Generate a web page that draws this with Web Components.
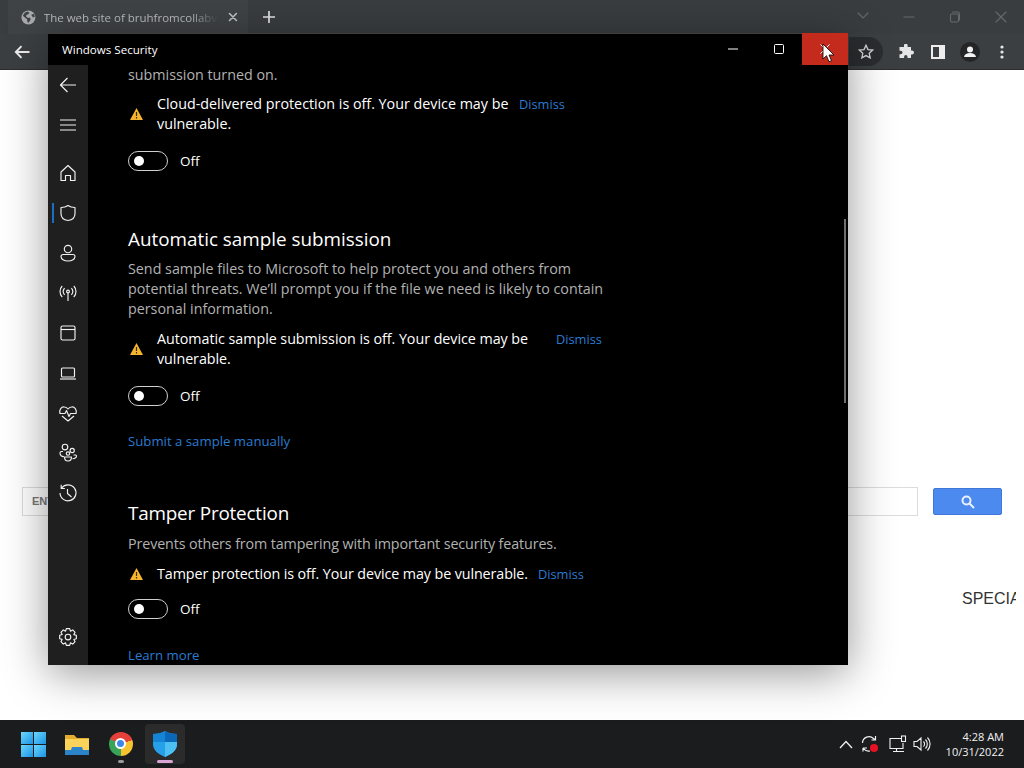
<!DOCTYPE html>
<html lang="en">
<head>
<meta charset="utf-8">
<title>Windows Security</title>
<style>
    html, body { margin: 0; height: 100%; overflow: hidden; background: #fff; }
</style>
</head>
<body>
<desktop-shell>
    <browser-tabs slot="tabs"></browser-tabs>
    <browser-toolbar slot="toolbar"></browser-toolbar>
    <web-page slot="page"></web-page>
    <task-bar slot="taskbar"></task-bar>
    <security-window slot="window">
        <security-pane>
            <p class="desc">submission turned on.</p>
            <warn-row style="--text-w: 351px">Cloud-delivered protection is off. Your device may be<br>vulnerable.</warn-row>
            <off-toggle></off-toggle>

            <h2>Automatic sample submission</h2>
            <p class="desc">Send sample files to Microsoft to help protect you and others from<br>potential threats. We’ll prompt you if the file we need is likely to contain<br>personal information.</p>
            <warn-row style="--text-w: 388px; --row-top: 10px; --tight: -.04px">Automatic sample submission is off. Your device may be<br>vulnerable.</warn-row>
            <off-toggle></off-toggle>
            <a class="more one">Submit a sample manually</a>

            <h2 class="tamper">Tamper Protection</h2>
            <p class="desc tight">Prevents others from tampering with important security features.</p>
            <warn-row style="--text-w: 370px; --row-top: 10px; --tight: -.09px">Tamper protection is off. Your device may be vulnerable.</warn-row>
            <off-toggle style="--toggle-top: 15px"></off-toggle>
            <a class="more two">Learn more</a>
        </security-pane>
    </security-window>
    <mouse-cursor slot="cursor"></mouse-cursor>
</desktop-shell>

<script>
function fill(el, html) {
    const root = el.attachShadow({mode: 'open'})
    const template = document.createElement('template')
    template.innerHTML = html
    root.append(template.content.cloneNode(true))
}

class DesktopShell extends HTMLElement {
    constructor() {
        super()
        fill(this, `
            <style>
                :host {
                    display: flex;
                    flex-direction: column;
                    position: relative;
                    width: 1024px;
                    height: 768px;
                    overflow: hidden;
                }
                .page { flex: 1; min-height: 0; display: flex; }
            </style>
            <slot name="tabs"></slot>
            <slot name="toolbar"></slot>
            <div class="page"><slot name="page"></slot></div>
            <slot name="taskbar"></slot>
            <slot name="window"></slot>
            <slot name="cursor"></slot>
        `)
    }
}

class BrowserTabs extends HTMLElement {
    constructor() {
        super()
        fill(this, `
            <style>
                :host {
                    display: flex;
                    align-items: center;
                    height: 34px;
                    background: #3a3d40;
                    color: #b9bbbd;
                    font: 11.500px "Open Sans", sans-serif;
                }
                .tab {
                    display: flex;
                    align-items: center;
                    box-sizing: border-box;
                    width: 240px;
                    height: 34px;
                    margin-left: 8px;
                    padding: 0 10px 0 13px;
                    background: #404346;
                }
                .title {
                    width: 176px;
                    margin-left: 8px;
                    white-space: nowrap;
                    -webkit-mask-image: linear-gradient(90deg, #000 85%, transparent);
                }
                .x { margin-left: 10px; }
                .plus { margin-left: 15px; }
                .controls { display: flex; margin-left: auto; margin-right: 0; }
                .controls svg { width: 46px; height: 28px; }
                svg { display: block; fill: none; stroke-linecap: round; }
            </style>
            <div class="tab">
                <svg width="15" height="15" viewBox="0 0 16 16">
                    <circle cx="8" cy="8" r="7.500" fill="#a8aaac"/>
                    <path d="M4 3l3-1.500 2 1-1 2-2 .500-.500 2 2 1.500 2-.500 1 2-2 3.500-1.500-.500-.500-3-3-2.500-1.500-1.500z" fill="#404346"/>
                    <path d="M11 5l3-1 1 3-2 1z" fill="#404346"/>
                </svg>
                <div class="title">The web site of bruhfromcollabv</div>
                <svg class="x" width="10" height="10" viewBox="0 0 10 10" stroke="#c4c6c8" stroke-width="1.600">
                    <path d="M1.500 1.500l7 7M8.500 1.500l-7 7"/>
                </svg>
            </div>
            <svg class="plus" width="12" height="12" viewBox="0 0 12 12" stroke="#e2e3e4" stroke-width="1.700">
                <path d="M6 .5v11M.5 6h11"/>
            </svg>
            <div class="controls">
                <svg viewBox="0 0 46 28" stroke="#66696c" stroke-width="1.100"><path d="M18 10l5 5 5-5"/></svg>
                <svg viewBox="0 0 46 28" stroke="#66696c" stroke-width="1.100"><path d="M18 14h10"/></svg>
                <svg viewBox="0 0 46 28" stroke="#66696c" stroke-width="1.100"><rect x="18.500" y="11" width="8" height="8" rx="1.500"/><path d="M20.500 9h5a2 2 0 0 1 2 2v6"/></svg>
                <svg viewBox="0 0 46 28" stroke="#66696c" stroke-width="1.100"><path d="M18 9l10 10M28 9l-10 10"/></svg>
            </div>
        `)
    }
}

class BrowserToolbar extends HTMLElement {
    constructor() {
        super()
        fill(this, `
            <style>
                :host {
                    display: flex;
                    align-items: center;
                    box-sizing: border-box;
                    height: 36px;
                    padding: 0 6px 0 14px;
                    background: #3c3f42;
                    border-bottom: 1px solid #2c2e30;
                }
                .tools { display: flex; align-items: center; margin-left: auto; }
                .star {
                    display: flex;
                    align-items: center;
                    justify-content: center;
                    width: 34px;
                    height: 29px;
                    margin-right: 7px;
                    border-radius: 0 15px 15px 0;
                    background: #2a2c2f;
                }
                .slot { width: 32px; display: flex; justify-content: center; }
                svg { display: block; }
            </style>
            <svg width="16" height="14" viewBox="0 0 16 14" fill="none" stroke="#eceded" stroke-width="1.900">
                <path d="M15.500 7H2M7.500 1.200L1.800 7l5.700 5.800"/>
            </svg>
            <div class="tools">
                <div class="star">
                    <svg width="16" height="15" viewBox="0 0 16 15" fill="none" stroke="#d6d7d8" stroke-width="1.300">
                        <path d="M8 1.300l2 4.300 4.600.5-3.400 3.200 1 4.600L8 11.600l-4.200 2.300 1-4.600L1.400 6.100 6 5.600z"/>
                    </svg>
                </div>
                <div class="slot">
                    <svg width="16" height="16" viewBox="0 0 16 16" fill="#e4e5e6">
                        <path d="M6 1.500a1.800 1.800 0 0 1 3.600 0V3h3.400v3.400h1a2 2 0 0 1 0 4h-1V14H9.500v-1.200a1.700 1.700 0 0 0-3.400 0V14H1.500v-3.700h1.200a1.800 1.800 0 0 0 0-3.600H1.500V3H6z"/>
                    </svg>
                </div>
                <div class="slot">
                    <svg width="14" height="14" viewBox="0 0 14 14" fill="none" stroke="#eeeeee" stroke-width="2">
                        <rect x="1" y="1" width="12" height="12"/>
                        <rect x="8" y="1" width="5" height="12" fill="#eeeeee" stroke="none"/>
                    </svg>
                </div>
                <div class="slot">
                    <svg width="20" height="20" viewBox="0 0 20 20">
                        <circle cx="10" cy="10" r="10" fill="#232527"/>
                        <circle cx="10" cy="7.500" r="3" fill="#f2f2f2"/>
                        <path d="M4 15c.5-3 3-4 6-4s5.500 1 6 4z" fill="#f2f2f2"/>
                    </svg>
                </div>
                <div class="slot">
                    <svg width="4" height="14" viewBox="0 0 4 14" fill="#e8e8e8">
                        <circle cx="2" cy="2" r="1.600"/><circle cx="2" cy="7" r="1.600"/><circle cx="2" cy="12" r="1.600"/>
                    </svg>
                </div>
            </div>
        `)
    }
}

class WebPage extends HTMLElement {
    constructor() {
        super()
        fill(this, `
            <style>
                :host {
                    display: block;
                    flex: 1;
                    background: #fff;
                    overflow: hidden;
                    font-family: "Liberation Sans", sans-serif;
                }
                .search {
                    display: flex;
                    align-items: flex-start;
                    gap: 15px;
                    margin: 417px 22px 0 22px;
                }
                .input {
                    flex: none;
                    width: 896px;
                    height: 29px;
                    box-sizing: border-box;
                    padding-left: 9px;
                    border: 1px solid #dcdcdc;
                    color: #777;
                    font-size: 11px;
                    font-weight: bold;
                    line-height: 27px;
                }
                .go {
                    display: flex;
                    align-items: center;
                    justify-content: center;
                    width: 69px;
                    height: 27px;
                    margin-top: 1px;
                    border-radius: 2px;
                    background: #4d8af0;
                    border: 1px solid #3f78d6;
                    box-sizing: border-box;
                }
                .offer {
                    width: 54px;
                    margin: 73px 0 0 962px;
                    overflow: hidden;
                    white-space: nowrap;
                    font-size: 16px;
                    line-height: 20px;
                    color: #333;
                }
            </style>
            <div class="search">
                <div class="input">ENTER</div>
                <div class="go">
                    <svg width="14" height="14" viewBox="0 0 14 14" fill="none" stroke="#e8f1ff" stroke-width="2">
                        <circle cx="5.500" cy="5.500" r="4"/><path d="M8.500 8.500l4.500 4.500"/>
                    </svg>
                </div>
            </div>
            <div class="offer">SPECIA</div>
        `)
    }
}

class TaskBar extends HTMLElement {
    constructor() {
        super()
        fill(this, `
            <style>
                :host {
                    display: flex;
                    align-items: center;
                    height: 48px;
                    background: #1b1c1d;
                    color: #f2f2f2;
                    font: 11px "Open Sans", sans-serif;
                }
                .apps { display: flex; margin-left: 13px; }
                .app {
                    position: relative;
                    display: flex;
                    align-items: center;
                    justify-content: center;
                    width: 40px;
                    height: 40px;
                    margin-right: 4px;
                    border-radius: 4px;
                }
                .app.on { background: #2b2b2b; }
                .dot {
                    position: absolute;
                    bottom: 1px;
                    height: 3px;
                    border-radius: 2px;
                }
                .win {
                    display: grid;
                    grid-template-columns: 12px 12px;
                    gap: 1px;
                }
                .win i { height: 12px; background: linear-gradient(135deg, #6bd6fb, #1b93e6); }
                .chrome {
                    position: relative;
                    width: 24px;
                    height: 24px;
                    border-radius: 50%;
                    background: conic-gradient(#e5413a 0 70deg, #f7c32e 70deg 180deg, #3aa35a 180deg 295deg, #e5413a 295deg);
                }
                .chrome::after {
                    content: "";
                    position: absolute;
                    left: 6px;
                    top: 6px;
                    width: 7px;
                    height: 7px;
                    border: 2.500px solid #fff;
                    border-radius: 50%;
                    background: #3f86e8;
                }
                .tray { display: flex; align-items: center; margin-left: auto; }
                .chev { margin-right: 8px; }
                .sync { margin-right: 10px; }
                .net { margin-right: 6px; }
                .clock { text-align: right; line-height: 15px; margin: 0 20px 0 15px; }
                svg { display: block; fill: none; }
            </style>
            <div class="apps">
                <div class="app"><div class="win"><i></i><i></i><i></i><i></i></div></div>
                <div class="app">
                    <svg width="26" height="24" viewBox="0 0 26 24">
                        <path d="M1 3h9l3 3h12v17H1z" fill="#e3ad2e"/>
                        <path d="M1 7h24v16H1z" fill="#fbd25a"/>
                        <path d="M8 15h10l1 3h6v5H1v-5h6z" fill="#2b83c9"/>
                    </svg>
                </div>
                <div class="app">
                    <div class="chrome"></div>
                    <div class="dot" style="width:6px;background:#9a9a9a"></div>
                </div>
                <div class="app on">
                    <svg width="24" height="26" viewBox="0 0 24 26">
                        <path d="M12 0c3 2 7 3 12 3v10c0 6-5 10-12 13C5 23 0 19 0 13V3c5 0 9-1 12-3z" fill="#27a0ea"/>
                        <path d="M12 0c3 2 7 3 12 3v8H12z" fill="#0b67b8"/>
                        <path d="M12 0C9 2 5 3 0 3v8h12z" fill="#1583d6"/>
                        <path d="M12 11h12v2c0 6-5 10-12 13z" fill="#4cc0f2"/>
                    </svg>
                    <div class="dot" style="width:16px;background:#d9a6d6"></div>
                </div>
            </div>
            <div class="tray">
                <svg class="chev" width="14" height="9" viewBox="0 0 14 9" stroke="#f0f0f0" stroke-width="1.300"><path d="M1 8l6-6.500L13 8"/></svg>
                <svg class="sync" width="18" height="18" viewBox="0 0 18 18" stroke="#f0f0f0" stroke-width="1.200">
                    <path d="M1.500 8a6.500 6.500 0 0 1 11-4.500l2 1.500M14.500 1v4h-4M2 13h4M2 13v3.500M2.500 13.500A6.500 6.500 0 0 0 9 16"/>
                    <circle cx="13" cy="13" r="4" fill="#e81123" stroke="none"/>
                </svg>
                <svg class="net" width="18" height="18" viewBox="0 0 18 18" stroke="#f0f0f0" stroke-width="1.100">
                    <path d="M12 3.500H1v10h13V8M7.500 13.500v2.500M4 16.500h11"/>
                    <rect x="12.500" y="1" width="4" height="5.500"/>
                </svg>
                <svg width="18" height="18" viewBox="0 0 18 18" stroke="#f0f0f0" stroke-width="1.100">
                    <path d="M1 6.500h3l4-3.500v12l-4-3.500H1zM10.500 6.500a3.500 3.500 0 0 1 0 5M12.500 4.500a6.500 6.500 0 0 1 0 9M14.500 2.500a9.500 9.500 0 0 1 0 13"/>
                </svg>
                <div class="clock">4:28 AM<br>10/31/2022</div>
            </div>
        `)
    }
}

class SecurityWindow extends HTMLElement {
    constructor() {
        super()
        fill(this, `
            <style>
                :host {
                    position: absolute;
                    left: 48px;
                    top: 33px;
                    width: 800px;
                    height: 632px;
                    display: flex;
                    flex-direction: column;
                    background: #000;
                    color: #fff;
                    font: 14.300px "Open Sans", sans-serif;
                    box-shadow: inset 0 1px #3f3f3f, 0 8px 42px rgba(0, 0, 0, .42);
                }
                .bar {
                    display: flex;
                    align-items: center;
                    flex: none;
                    height: 32px;
                    padding-left: 14px;
                    font-size: 11.600px;
                }
                .caption { display: flex; margin-left: auto; }
                .caption div {
                    display: flex;
                    align-items: center;
                    justify-content: center;
                    width: 46px;
                    height: 32px;
                }
                .caption .close { background: #c42b1c; }
                .body { flex: 1; min-height: 0; display: flex; position: relative; }
                .scroll {
                    position: absolute;
                    right: 2px;
                    top: 154px;
                    width: 2px;
                    height: 184px;
                    background: #6e6e6e;
                }
                .content { flex: 1; min-width: 0; overflow: hidden; }
                svg { display: block; }
            </style>
            <div class="bar">
                Windows Security
                <div class="caption">
                    <div><svg width="10" height="2" viewBox="0 0 10 2"><path d="M0 1h10" stroke="#fff"/></svg></div>
                    <div><svg width="10" height="10" viewBox="0 0 10 10"><rect x=".5" y=".5" width="9" height="9" rx="1" fill="none" stroke="#fff"/></svg></div>
                    <div class="close"><svg width="10" height="10" viewBox="0 0 10 10"><path d="M.5.5l9 9M9.500.5l-9 9" stroke="#fff"/></svg></div>
                </div>
            </div>
            <div class="body">
                <nav-rail></nav-rail>
                <div class="content"><slot></slot></div>
                <div class="scroll"></div>
            </div>
        `)
    }
}

function gearPath(cx, cy, outer, inner) {
    let d = ''
    for (let i = 0; i < 8; i++) {
        const a = i * Math.PI / 4
        const pts = [[inner, a - .39], [outer, a - .2], [outer, a + .2]]
        for (const [r, t] of pts) {
            d += (d ? 'L' : 'M') + (cx + r * Math.sin(t)).toFixed(2) + ' ' + (cy - r * Math.cos(t)).toFixed(2)
        }
    }
    return d + 'z'
}

class NavRail extends HTMLElement {
    constructor() {
        super()
        fill(this, `
            <style>
                :host {
                    display: flex;
                    flex-direction: column;
                    flex: none;
                    box-sizing: border-box;
                    width: 40px;
                    padding-bottom: 8px;
                    background: #1f1f1f;
                }
                .item {
                    position: relative;
                    display: flex;
                    align-items: center;
                    justify-content: center;
                    flex: none;
                    height: 40px;
                }
                .gap { height: 8px; flex: none; }
                .on::before {
                    content: "";
                    position: absolute;
                    left: 4px;
                    top: 10px;
                    width: 2px;
                    height: 20px;
                    background: #1a6fc4;
                }
                .end { margin-top: auto; }
                svg {
                    display: block;
                    width: 20px;
                    height: 20px;
                    fill: none;
                    stroke: #f2f2f2;
                    stroke-width: 1.150;
                    stroke-linejoin: round;
                }
            </style>
            <div class="item"><svg viewBox="0 0 20 20"><path d="M18 10H2.500M9.500 3l-7 7 7 7"/></svg></div>
            <div class="item"><svg viewBox="0 0 20 20"><path d="M2 5h16M2 10h16M2 15h16"/></svg></div>
            <div class="gap"></div>
            <div class="item"><svg viewBox="0 0 20 20"><path d="M10 2.500L17 9v8.500h-4.500v-5h-5v5H3V9z"/></svg></div>
            <div class="item on"><svg viewBox="0 0 20 20"><path d="M10 2.500c2 1.500 4.500 2 7 2v6c0 4-3 6.500-7 7-4-.5-7-3-7-7v-6c2.500 0 5-.5 7-2z"/></svg></div>
            <div class="item"><svg viewBox="0 0 20 20"><circle cx="10" cy="6" r="3.700"/><path d="M5 11.500h10a2 2 0 0 1 2 2c0 2.500-3 4.500-7 4.500s-7-2-7-4.500a2 2 0 0 1 2-2z"/></svg></div>
            <div class="item"><svg viewBox="0 0 20 20"><circle cx="10" cy="8.500" r="1.400"/><path d="M10 10v8M6.600 5.200a5 5 0 0 0 0 6.600M13.400 5.200a5 5 0 0 1 0 6.600M4.200 3a8 8 0 0 0 0 11M15.800 3a8 8 0 0 1 0 11"/></svg></div>
            <div class="item"><svg viewBox="0 0 20 20"><rect x="3" y="3" width="14" height="14" rx="1.500"/><path d="M3 6.500h14"/></svg></div>
            <div class="item"><svg viewBox="0 0 20 20"><rect x="3.500" y="5" width="13" height="9" rx="1"/><path d="M2 16h16"/></svg></div>
            <div class="item"><svg viewBox="0 0 20 20"><path d="M2 10.500C.8 6.500 3.500 3.500 6.500 4c1.500.2 2.700 1 3.500 2 .8-1 2-1.800 3.500-2 3-.5 5.700 2.500 4.500 6.500M4 13l6 5 6-5M1.500 10.500H7l1.500-3 2.500 6 1.500-3h6"/></svg></div>
            <div class="item"><svg viewBox="0 0 20 20"><circle cx="7" cy="4" r="2.800"/><circle cx="14.200" cy="7.500" r="2.100"/><circle cx="10" cy="10.500" r="1.700"/><path d="M5 8.500H3.500A1.500 1.500 0 0 0 2 10c0 2 1.500 3.500 4 3.800M15.500 12h2a1 1 0 0 1 1 1c0 1.500-1.500 2.500-4 2.800M6.500 14h7c0 2.500-1.500 4-3.500 4s-3.500-1.500-3.500-4z"/></svg></div>
            <div class="item"><svg viewBox="0 0 20 20"><path d="M3.600 5A8 8 0 1 1 2 10M3.200 1.800V5.500h3.700M9.500 6v4.500l4 3.500"/></svg></div>
            <div class="item end"><svg viewBox="0 0 20 20"><path d="${gearPath(10, 10, 8.500, 6.300)}"/><circle cx="10" cy="10" r="2.800"/></svg></div>
        `)
    }
}

class SecurityPane extends HTMLElement {
    constructor() {
        super()
        // light dom holds the text, it inherits font and colour from the window
        fill(this, `
            <style>
                :host { display: block; padding-left: 40px; }
                ::slotted(p) {
                    margin: 0;
                    color: #b2b2b2;
                    line-height: 20px;
                    white-space: nowrap;
                }
                ::slotted(p.tight) { letter-spacing: -.11px; }
                ::slotted(h2) {
                    margin: 54px 0 6px;
                    font-size: 18.850px;
                    font-weight: 400;
                    line-height: 28px;
                    white-space: nowrap;
                }
                ::slotted(h2.tamper) { margin: 48px 0 7px; letter-spacing: -.18px; }
                ::slotted(a) {
                    display: block;
                    color: #2b7bd0;
                    line-height: 20px;
                    font-size: 13.200px;
                }
                ::slotted(a.one) { margin-top: 25px; }
                ::slotted(a.two) { margin-top: 26px; }
            </style>
            <slot></slot>
        `)
    }
}

class WarnRow extends HTMLElement {
    constructor() {
        super()
        fill(this, `
            <style>
                :host {
                    display: flex;
                    align-items: center;
                    margin-top: var(--row-top, 9px);
                    line-height: 20px;
                }
                svg { display: block; flex: none; margin: 0 14px 0 2px; }
                .text {
                    flex: none;
                    width: var(--text-w);
                    white-space: nowrap;
                    letter-spacing: var(--tight, 0);
                }
                .dismiss {
                    align-self: flex-start;
                    margin-left: 11px;
                    color: #2b7bd0;
                    font-size: 12.800px;
                }
            </style>
            <svg width="13" height="12" viewBox="0 0 13 12">
                <path d="M6.500 0L13 12H0z" fill="#f5b52e"/>
                <path d="M6.500 4v4M6.500 9v1.500" stroke="#3a2a00" stroke-width="1.200"/>
            </svg>
            <div class="text"><slot></slot></div>
            <div class="dismiss">Dismiss</div>
        `)
    }
}

class OffToggle extends HTMLElement {
    constructor() {
        super()
        fill(this, `
            <style>
                :host {
                    display: flex;
                    align-items: center;
                    gap: 12px;
                    margin-top: var(--toggle-top, 17px);
                    font-size: 13.500px;
                    line-height: 20px;
                }
                .track {
                    display: flex;
                    align-items: center;
                    box-sizing: border-box;
                    width: 40px;
                    height: 20px;
                    padding-left: 5px;
                    border: 1px solid #cfcfcf;
                    border-radius: 10px;
                }
                .knob { width: 10px; height: 10px; border-radius: 50%; background: #fff; }
            </style>
            <div class="track"><div class="knob"></div></div>
            <div>Off</div>
        `)
    }
}

class MouseCursor extends HTMLElement {
    constructor() {
        super()
        fill(this, `
            <style>
                :host { position: absolute; left: 822px; top: 43px; width: 13px; height: 20px; }
                svg { display: block; }
            </style>
            <svg width="13" height="20" viewBox="0 0 13 20">
                <path d="M1 1v15l3.500-3.300 2.500 6 2.500-1-2.500-5.700h5z" fill="#fff" stroke="#000" stroke-width=".8"/>
            </svg>
        `)
    }
}

customElements.define('desktop-shell', DesktopShell)
customElements.define('browser-tabs', BrowserTabs)
customElements.define('browser-toolbar', BrowserToolbar)
customElements.define('web-page', WebPage)
customElements.define('task-bar', TaskBar)
customElements.define('security-window', SecurityWindow)
customElements.define('nav-rail', NavRail)
customElements.define('security-pane', SecurityPane)
customElements.define('warn-row', WarnRow)
customElements.define('off-toggle', OffToggle)
customElements.define('mouse-cursor', MouseCursor)
</script>
</body>
</html>
